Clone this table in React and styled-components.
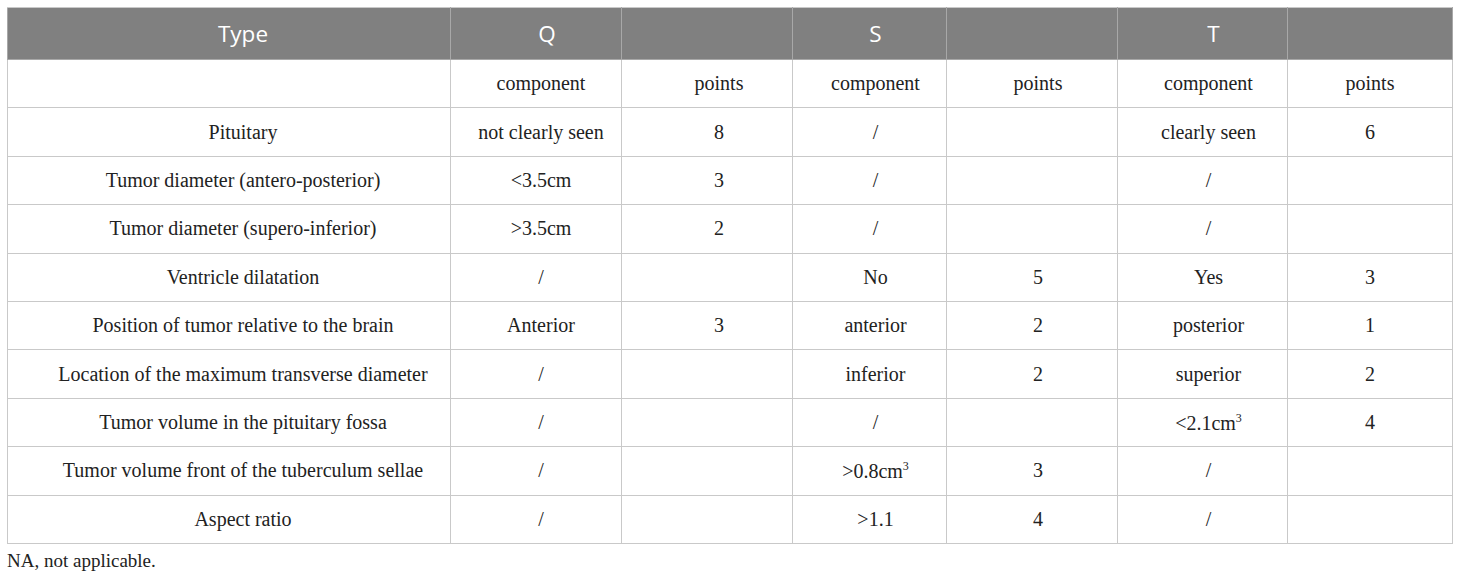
import styled, { createGlobalStyle } from 'styled-components';

const GlobalStyle = createGlobalStyle`
  body {
    margin: 0;
    background: #ffffff;
    font-family: 'Liberation Serif', 'Times New Roman', serif;
    color: #222;
  }
`;

const Page = styled.div`
  padding: 7px 8px 0 7px;
`;

const Table = styled.table`
  border-collapse: collapse;
  table-layout: fixed;
  width: 1445px;
  border: 1px solid #c9c9c9;
`;

const HeadCell = styled.th`
  background: #808080;
  color: #fff;
  font-family: 'Open Sans', 'Noto Sans', sans-serif;
  font-weight: 400;
  font-size: 22.5px;
  height: 51px;
  padding: 0 0 0 ${(p) => p.$shift}px;
  text-align: center;
  border: 1px solid #a8a8a8;
  border-top-color: #c9c9c9;
`;

const Cell = styled.td`
  height: 47.4px;
  padding: 0 0 0 ${(p) => p.$shift}px;
  text-align: center;
  font-size: 20px;
  border: 1px solid #c9c9c9;
  color: #222;
  white-space: nowrap;
`;

const Sup = styled.sup`
  font-size: 12px;
`;

const Note = styled.div`
  margin-top: 6px;
  font-size: 19px;
  color: #222;
`;

const widths = [443, 171, 171, 154, 171, 170, 165];
const shifts = [28, 10, 24, 12, 12, 12, 0];

const header = ['Type', 'Q', '', 'S', '', 'T', ''];
const headShifts = [28, 22, 0, 12, 0, 22, 0];

const rows = [
  ['', 'component', 'points', 'component', 'points', 'component', 'points'],
  ['Pituitary', 'not clearly seen', '8', '/', '', 'clearly seen', '6'],
  ['Tumor diameter (antero-posterior)', '<3.5cm', '3', '/', '', '/', ''],
  ['Tumor diameter (supero-inferior)', '>3.5cm', '2', '/', '', '/', ''],
  ['Ventricle dilatation', '/', '', 'No', '5', 'Yes', '3'],
  ['Position of tumor relative to the brain', 'Anterior', '3', 'anterior', '2', 'posterior', '1'],
  ['Location of the maximum transverse diameter', '/', '', 'inferior', '2', 'superior', '2'],
  ['Tumor volume in the pituitary fossa', '/', '', '/', '', { t: '<2.1cm', sup: '3' }, '4'],
  ['Tumor volume front of the tuberculum sellae', '/', '', { t: '>0.8cm', sup: '3' }, '3', '/', ''],
  ['Aspect ratio', '/', '', '>1.1', '4', '/', ''],
];

function renderCell(v, i) {
  if (v && typeof v === 'object') {
    return (
      <Cell key={i} $shift={shifts[i]}>
        {v.t}
        <Sup>{v.sup}</Sup>
      </Cell>
    );
  }
  return (
    <Cell key={i} $shift={shifts[i]}>
      {v}
    </Cell>
  );
}

export default function App() {
  return (
    <>
      <GlobalStyle />
      <Page>
        <Table>
          <colgroup>
            {widths.map((w, i) => (
              <col key={i} style={{ width: w }} />
            ))}
          </colgroup>
          <thead>
            <tr>
              {header.map((h, i) => (
                <HeadCell key={i} $shift={headShifts[i]}>
                  {h}
                </HeadCell>
              ))}
            </tr>
          </thead>
          <tbody>
            {rows.map((r, ri) => (
              <tr key={ri}>{r.map(renderCell)}</tr>
            ))}
          </tbody>
        </Table>
        <Note>NA, not applicable.</Note>
      </Page>
    </>
  );
}
